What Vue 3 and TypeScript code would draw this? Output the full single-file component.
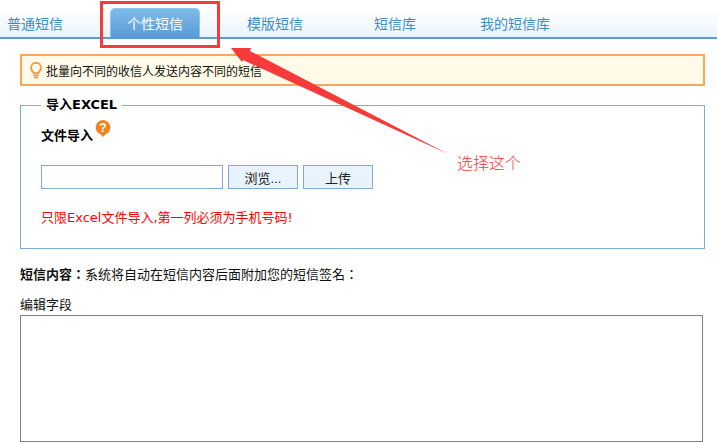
<template>
  <div class="page">
    <ul class="tabs">
      <li
        v-for="(tab, index) in tabs"
        :key="tab"
        class="tab"
        :class="{ active: index === activeTab }"
      >{{ tab }}</li>
    </ul>

    <div class="content">
      <div class="notice">
        <svg class="bulb" width="12" height="17" viewBox="0 0 12 17" fill="none" stroke="#f9963c" stroke-width="1.8">
          <path d="M3.6 11.2C3.4 9.6 1 8.6 1 5.8a5 5 0 0 1 10 0c0 2.8-2.4 3.8-2.6 5.4z" />
          <path d="M4 13.4h4M4.8 15.6h2.4" stroke-linecap="round" />
        </svg>
        <span>批量向不同的收信人发送内容不同的短信</span>
      </div>

      <fieldset class="import-box">
        <legend>导入EXCEL</legend>
        <div class="file-label">
          <b>文件导入</b>
          <svg class="help" width="16" height="17" viewBox="0 0 16 17">
            <path d="M8 0a7.4 7.4 0 0 1 2.6 14.3L8 17l-2.6-2.7A7.4 7.4 0 0 1 8 0z" fill="#f58220" />
            <text x="8" y="12" text-anchor="middle" class="help-mark">?</text>
          </svg>
        </div>
        <div class="file-row">
          <input class="file-input" type="text" />
          <button class="btn" type="button">浏览...</button>
          <button class="btn" type="button">上传</button>
        </div>
        <p class="warn">只限Excel文件导入,第一列必须为手机号码!</p>
      </fieldset>

      <p class="sms-hint"><b>短信内容：</b>系统将自动在短信内容后面附加您的短信签名：</p>
      <div class="field-title">编辑字段</div>
      <textarea class="editor"></textarea>
    </div>

    <!-- 截图上的标注 -->
    <div class="mark-box"></div>
    <svg class="mark-arrow" width="717" height="443" viewBox="0 0 717 443">
      <polygon points="231,48 251,48 250,51 448,154 243,60 242,62" fill="#f73b3b" />
    </svg>
    <span class="mark-text">选择这个</span>
  </div>
</template>

<script setup lang="ts">
const tabs: string[] = ['普通短信', '个性短信', '模版短信', '短信库', '我的短信库'];
const activeTab = 1;
</script>

<style>
html, body { margin: 0; background: #fff; overflow: hidden; }
</style>

<style scoped>
.page {
  position: relative;
  width: 717px;
  height: 443px;
  overflow: hidden;
  font-family: "Liberation Sans", "Noto Sans CJK SC", sans-serif;
  font-size: 13px;
  color: #111;
}

.tabs {
  display: flex;
  gap: 30px;
  height: 29px;
  margin: 0;
  padding: 8px 0 0;
  list-style: none;
  border-bottom: 2px solid #5b9bd5;
  background: linear-gradient(#fff 10px, #e8f3fd);
}
.tab {
  flex: none;
  width: 90px;
  height: 29px;
  box-sizing: border-box;
  padding-top: 5px;
  font-size: 14px;
  line-height: 22px;
  text-align: center;
  color: #3f8dc4;
}
.tab:first-child { margin-left: -10px; }
.tab.active {
  color: #fff;
  border: 1px solid #8fc6ee;
  border-bottom: none;
  border-radius: 5px 5px 0 0;
  padding-top: 4px;
  background: linear-gradient(#7fbbe9, #5a9bd8);
}

.content { padding: 15px 12px 0 20px; }

.notice {
  display: flex;
  align-items: center;
  gap: 4px;
  height: 32px;
  box-sizing: border-box;
  padding-left: 8px;
  border: 2px solid #ffa55a;
  background: #fffbe8;
  font-size: 12px;
}

.import-box {
  height: 153px;
  box-sizing: border-box;
  margin: 10px 0 0;
  padding: 0 20px;
  border: 1px solid #7fabd6;
  min-width: 0;
}
.import-box legend {
  padding: 0 5px;
  font-family: "DejaVu Sans", "Noto Sans CJK SC", sans-serif;
  font-weight: bold;
  color: #000;
  line-height: 18px;
}
.file-label {
  display: flex;
  align-items: flex-start;
  height: 28px;
  margin-top: 5px;
}
.file-label b { margin-top: 8px; line-height: 18px; color: #000; }
.help { margin: 1px 0 0 2px; flex: none; }
.help-mark { font: bold 12px "Liberation Sans", sans-serif; fill: #fff; }

.file-row {
  display: flex;
  gap: 5px;
  margin-top: 18px;
}
.file-input {
  width: 182px;
  height: 24px;
  box-sizing: border-box;
  padding: 0;
  border: 1px solid #7fabd6;
  background: #fff;
}
.btn {
  width: 70px;
  height: 24px;
  padding: 0;
  border: 1px solid #7fabd6;
  background: #e8f3fd;
  font: inherit;
  color: #222;
}
.warn {
  margin: 20px 0 0;
  font-family: "DejaVu Sans", "Noto Sans CJK SC", sans-serif;
  line-height: 18px;
  color: #f00;
}

.sms-hint {
  margin: 17px 0 0;
  font-family: "Liberation Sans", "Noto Sans CJK TC", sans-serif;
  line-height: 18px;
}
.field-title {
  margin-top: 12px;
  line-height: 18px;
}
.editor {
  display: block;
  width: 683px;
  height: 127px;
  box-sizing: border-box;
  margin-top: 1px;
  padding: 0;
  border: 1px solid #808080;
  background: #fff;
  resize: none;
}

.mark-box {
  position: absolute;
  left: 100px;
  top: 1px;
  width: 120px;
  height: 47px;
  box-sizing: border-box;
  border: 3px solid #f73b3b;
}
.mark-arrow {
  position: absolute;
  left: 0;
  top: 0;
  pointer-events: none;
}
.mark-text {
  position: absolute;
  left: 457px;
  top: 153px;
  font-size: 16px;
  font-weight: 300;
  line-height: 22px;
  color: #f33;
}
</style>
